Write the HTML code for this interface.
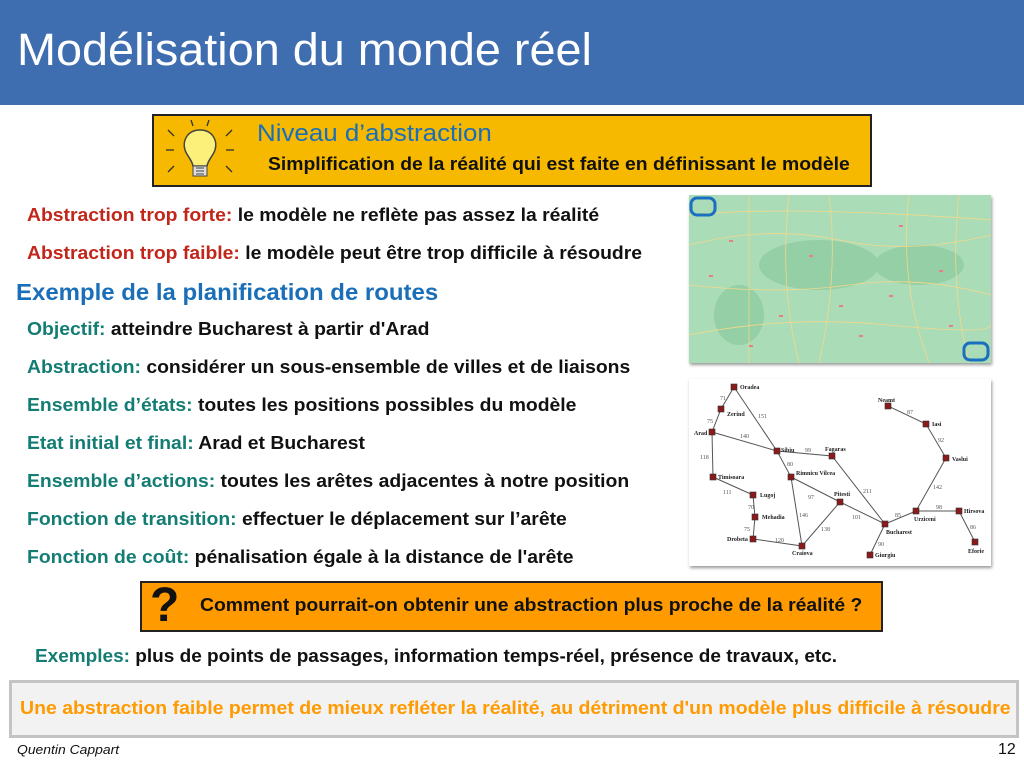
<!DOCTYPE html>
<html><head><meta charset="utf-8"><style>
*{margin:0;padding:0;box-sizing:border-box}
body{width:1024px;height:768px;position:relative;background:#fff;font-family:"Liberation Sans",sans-serif;overflow:hidden}
.t{position:absolute;white-space:nowrap;font-weight:bold;font-size:18px;transform-origin:left center;color:#111}
.b{transform:scaleX(1.075)}
.r{color:#c2261a}.g{color:#137d74}
</style></head><body>
<div style="position:absolute;left:0;top:0;width:1024px;height:105px;background:#3e6db0"></div>
<div class="t" style="left:17px;top:24px;font-size:45px;font-weight:normal;color:#fff;transform:scaleX(1.04)">Modélisation du monde réel</div>

<div style="position:absolute;left:152px;top:114px;width:720px;height:73px;background:#f7b900;border:2px solid #222"></div>
<svg style="position:absolute;left:160px;top:116px" width="80" height="68" viewBox="0 0 80 68">
<g stroke="#333" stroke-width="1.3" fill="none">
<line x1="6" y1="34" x2="14" y2="34"/><line x1="66" y1="34" x2="74" y2="34"/>
<line x1="8" y1="14" x2="14" y2="20"/><line x1="72" y1="14" x2="66" y2="20"/>
<line x1="8" y1="56" x2="14" y2="50"/><line x1="72" y1="56" x2="66" y2="50"/>
<line x1="31" y1="4" x2="33" y2="10"/><line x1="49" y1="4" x2="47" y2="10"/>
</g>
<path d="M40 14 C28 14 22 24 25 34 C27 40 32 44 33 50 L47 50 C48 44 53 40 55 34 C58 24 52 14 40 14Z" fill="#fdf07a" stroke="#444" stroke-width="1.5"/>
<rect x="33" y="50" width="14" height="10" fill="#ddd" stroke="#444"/>
<path d="M36 52h8M36 55h8M36 58h8" stroke="#444"/>
</svg>
<div class="t" style="left:257px;top:120px;font-size:24px;color:#1a6fb8;font-weight:normal;transform:scaleX(1.08)">Niveau d’abstraction</div>
<div class="t b" style="left:268px;top:154px">Simplification de la réalité qui est faite en définissant le modèle</div>

<div class="t b" style="left:27px;top:205px"><span class="r">Abstraction trop forte:</span> le modèle ne reflète pas assez la réalité</div>
<div class="t b" style="left:27px;top:243px"><span class="r">Abstraction trop faible:</span> le modèle peut être trop difficile à résoudre</div>
<div class="t" style="left:16px;top:279px;font-size:23px;color:#1a6fb8;transform:scaleX(1.042)">Exemple de la planification de routes</div>
<div class="t b" style="left:27px;top:319px"><span class="g">Objectif:</span> atteindre Bucharest à partir d'Arad</div>
<div class="t b" style="left:27px;top:357px"><span class="g">Abstraction:</span> considérer un sous-ensemble de villes et de liaisons</div>
<div class="t b" style="left:27px;top:395px"><span class="g">Ensemble d’états:</span> toutes les positions possibles du modèle</div>
<div class="t b" style="left:27px;top:433px"><span class="g">Etat initial et final:</span> Arad et Bucharest</div>
<div class="t b" style="left:27px;top:471px"><span class="g">Ensemble d’actions:</span> toutes les arêtes adjacentes à notre position</div>
<div class="t b" style="left:27px;top:509px"><span class="g">Fonction de transition:</span> effectuer le déplacement sur l’arête</div>
<div class="t b" style="left:27px;top:547px"><span class="g">Fonction de coût:</span> pénalisation égale à la distance de l'arête</div>

<!-- map -->
<div style="position:absolute;left:689px;top:195px;width:302px;height:168px;background:#a9dcb6;box-shadow:1px 2px 3px #999;overflow:hidden">
<svg width="302" height="168" viewBox="0 0 302 168">
<rect width="302" height="168" fill="#abdcb8"/>
<ellipse cx="130" cy="70" rx="60" ry="25" fill="#95cfa5"/>
<ellipse cx="230" cy="70" rx="45" ry="20" fill="#95cfa5"/>
<ellipse cx="50" cy="120" rx="25" ry="30" fill="#95cfa5"/>
<g stroke="#f2d98a" stroke-width="0.8" fill="none">
<path d="M0 50 Q80 30 150 45 T302 40"/><path d="M0 90 Q90 100 160 90 T302 100"/><path d="M0 140 Q100 120 200 130 T302 130"/>
<path d="M60 0 V168"/><path d="M140 0 Q150 80 130 168"/><path d="M220 0 Q210 90 240 168"/>
<path d="M0 20 Q100 10 302 25"/><path d="M100 0 Q90 90 110 168"/><path d="M270 0 Q260 90 280 168"/>
</g>
<g fill="#e98080"><rect x="40" y="45" width="4" height="2"/><rect x="120" y="60" width="4" height="2"/><rect x="200" y="100" width="4" height="2"/><rect x="250" y="75" width="4" height="2"/><rect x="90" y="120" width="4" height="2"/><rect x="170" y="140" width="4" height="2"/><rect x="260" y="130" width="4" height="2"/><rect x="20" y="80" width="4" height="2"/><rect x="150" y="110" width="4" height="2"/><rect x="60" y="150" width="4" height="2"/><rect x="210" y="30" width="4" height="2"/></g>
<rect x="2" y="3" width="24" height="17" rx="6" fill="none" stroke="#1a6fc0" stroke-width="3"/>
<rect x="275" y="148" width="24" height="17" rx="6" fill="none" stroke="#1a6fc0" stroke-width="3"/>
</svg></div>

<!-- graph -->
<div style="position:absolute;left:689px;top:379px;width:302px;height:187px;background:#fff;box-shadow:1px 2px 3px #999"></div>
<svg style="position:absolute;left:0;top:0" width="1024" height="768" viewBox="0 0 1024 768">
<g stroke="#555" stroke-width="1" fill="none">
<path d="M734 387L721 409L712 432L713 477L753 495L755 517L753 539L802 546L791 477L777 451L734 387"/>
<path d="M712 432L777 451L832 456L885 524L870 555"/>
<path d="M791 477L840 502L885 524L916 511L959 511L975 542"/>
<path d="M802 546L840 502"/><path d="M916 511L946 458L926 424L888 406"/>
</g>
<g fill="#8b1a1a" stroke="#333" stroke-width="0.6">
<rect x="731" y="384" width="6" height="6"/><rect x="718" y="406" width="6" height="6"/><rect x="709" y="429" width="6" height="6"/><rect x="710" y="474" width="6" height="6"/><rect x="750" y="492" width="6" height="6"/><rect x="752" y="514" width="6" height="6"/><rect x="750" y="536" width="6" height="6"/><rect x="799" y="543" width="6" height="6"/><rect x="774" y="448" width="6" height="6"/><rect x="788" y="474" width="6" height="6"/><rect x="829" y="453" width="6" height="6"/><rect x="837" y="499" width="6" height="6"/><rect x="882" y="521" width="6" height="6"/><rect x="867" y="552" width="6" height="6"/><rect x="913" y="508" width="6" height="6"/><rect x="956" y="508" width="6" height="6"/><rect x="972" y="539" width="6" height="6"/><rect x="943" y="455" width="6" height="6"/><rect x="923" y="421" width="6" height="6"/><rect x="885" y="403" width="6" height="6"/>
</g>
<g font-family="Liberation Serif" font-size="6" font-weight="bold" fill="#222">
<text x="740" y="389">Oradea</text><text x="727" y="416">Zerind</text><text x="694" y="435">Arad</text><text x="718" y="479">Timisoara</text><text x="760" y="497">Lugoj</text><text x="762" y="519">Mehadia</text><text x="727" y="541">Drobeta</text><text x="792" y="555">Craiova</text><text x="781" y="452">Sibiu</text><text x="796" y="475">Rimnicu Vilcea</text><text x="825" y="451">Fagaras</text><text x="834" y="496">Pitesti</text><text x="886" y="534">Bucharest</text><text x="875" y="557">Giurgiu</text><text x="914" y="521">Urziceni</text><text x="964" y="513">Hirsova</text><text x="968" y="553">Eforie</text><text x="952" y="461">Vaslui</text><text x="932" y="426">Iasi</text><text x="878" y="402">Neamt</text>
</g>
<g font-family="Liberation Serif" font-size="6" fill="#555">
<text x="720" y="400">71</text><text x="707" y="423">75</text><text x="758" y="418">151</text><text x="740" y="438">140</text><text x="805" y="452">99</text><text x="700" y="459">118</text><text x="787" y="466">80</text><text x="723" y="494">111</text><text x="748" y="509">70</text><text x="744" y="531">75</text><text x="775" y="542">120</text><text x="808" y="499">97</text><text x="799" y="517">146</text><text x="821" y="531">138</text><text x="852" y="519">101</text><text x="863" y="493">211</text><text x="895" y="517">85</text><text x="936" y="509">98</text><text x="933" y="489">142</text><text x="938" y="442">92</text><text x="907" y="414">87</text><text x="970" y="529">86</text><text x="878" y="546">90</text>
</g>
</svg>

<div style="position:absolute;left:140px;top:581px;width:743px;height:51px;background:#ff9a00;border:2px solid #222"></div>
<div class="t" style="left:150px;top:578px;font-size:48px;font-weight:bold;color:#111">?</div>
<div class="t" style="left:200px;top:595px;transform:scaleX(1.075)">Comment pourrait-on obtenir une abstraction plus proche de la réalité ?</div>
<div class="t" style="left:35px;top:646px;transform:scaleX(1.055)"><span class="g">Exemples:</span> plus de points de passages, information temps-réel, présence de travaux, etc.</div>

<div style="position:absolute;left:9px;top:680px;width:1010px;height:58px;background:#f2f2f2;border:3px solid #c4c4c4"></div>
<div class="t" style="left:20px;top:698px;color:#ff9a00;transform:scaleX(1.082)">Une abstraction faible permet de mieux refléter la réalité, au détriment d'un modèle plus difficile à résoudre</div>
<div class="t" style="left:17px;top:742px;font-size:13px;font-weight:normal;font-style:italic;transform:scaleX(1.07)">Quentin Cappart</div>
<div class="t" style="left:998px;top:741px;font-size:16px;font-weight:normal">12</div>
</body></html>
